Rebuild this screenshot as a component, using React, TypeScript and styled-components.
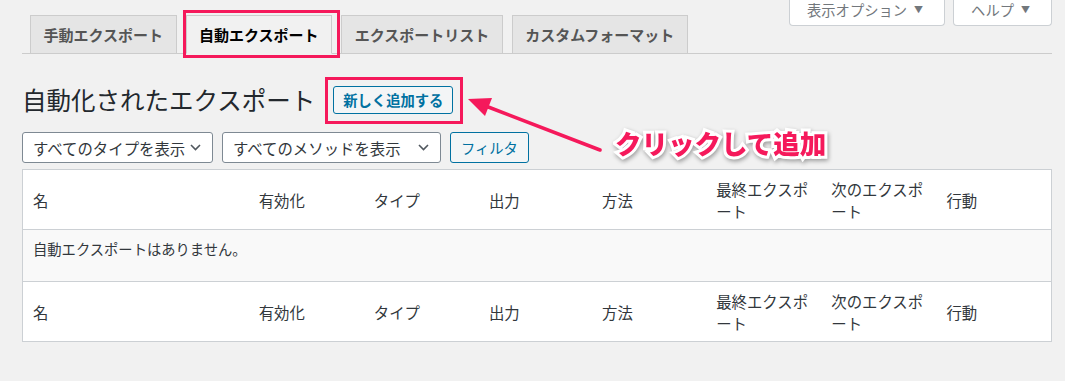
import React from "react";
import styled, { createGlobalStyle } from "styled-components";

const PINK = "#f5195b";

const Global = createGlobalStyle`
  html, body { margin: 0; padding: 0; background: #f1f1f1; }
  body { font-family: "Noto Sans CJK JP", "Noto Sans", sans-serif; color: #32373c; }
  * { box-sizing: border-box; }
`;

const Page = styled.div`
  position: relative;
  width: 1065px;
  height: 381px;
  padding: 0 13px 0 22px;
  overflow: hidden;
`;

const TopBar = styled.div`
  display: grid;
`;

const TabNav = styled.nav`
  grid-area: 1 / 1;
  display: flex;
  gap: 9px;
  padding: 15px 0 0 8px;
  border-bottom: 1px solid #ccc;
`;

const Tab = styled.a<{ $active?: boolean }>`
  position: relative;
  display: block;
  margin-bottom: -1px;
  padding: 5px 12.5px;
  border: 1px solid #ccc;
  border-bottom-color: ${(p) => (p.$active ? "#f1f1f1" : "#ccc")};
  background: ${(p) => (p.$active ? "#f1f1f1" : "#e5e5e5")};
  color: ${(p) => (p.$active ? "#000" : "#555")};
  font-size: 15px;
  font-weight: 700;
  line-height: 27px;
  white-space: nowrap;
  &::after {
    content: "";
    display: ${(p) => (p.$active ? "block" : "none")};
    position: absolute;
    top: -6px;
    left: -4px;
    right: -9px;
    bottom: -5px;
    border: 3px solid ${PINK};
  }
`;

const ScreenMeta = styled.div`
  grid-area: 1 / 1;
  justify-self: end;
  align-self: start;
  display: flex;
  gap: 8px;
`;

const MetaButton = styled.button`
  display: flex;
  align-items: center;
  height: 26px;
  padding: 0 21px 6px 17px;
  border: 1px solid #ccd0d4;
  border-top: none;
  border-radius: 0 0 4px 4px;
  background: #fff;
  color: #72777c;
  font-family: inherit;
  font-size: 14.3px;
  line-height: 20px;
`;

const Caret = styled.span`
  margin-left: 7px;
  font-size: 9px;
  color: #72777c;
`;

const TitleRow = styled.div`
  display: flex;
  align-items: center;
  margin-top: 30px;
`;

const Title = styled.h1`
  margin: 0;
  font-size: 24.5px;
  font-weight: 400;
  line-height: 32px;
  color: #23282d;
`;

const AddButton = styled.button`
  position: relative;
  margin-left: 18px;
  height: 28px;
  padding: 0 9px;
  border: 1px solid #0071a1;
  border-radius: 3px;
  background: #f3f5f6;
  color: #0071a1;
  font-family: inherit;
  font-size: 14.3px;
  font-weight: 700;
  line-height: 26px;
  &::after {
    content: "";
    position: absolute;
    top: -10px;
    left: -9px;
    right: -11px;
    bottom: -11px;
    border: 3px solid ${PINK};
  }
`;

const FilterRow = styled.div`
  display: flex;
  gap: 9px;
  margin-top: 16px;
`;

const Select = styled.div<{ $w: number }>`
  display: flex;
  align-items: center;
  justify-content: space-between;
  width: ${(p) => p.$w}px;
  height: 31px;
  padding: 0 11px 0 10px;
  border: 1px solid #7e8993;
  border-radius: 3px;
  background: #fff;
  color: #32373c;
  font-size: 15.4px;
  white-space: nowrap;
`;

const FilterButton = styled.button`
  height: 31px;
  padding: 0 10px;
  border: 1px solid #0071a1;
  border-radius: 3px;
  background: #f3f5f6;
  color: #0071a1;
  font-family: inherit;
  font-size: 14.3px;
`;

const Table = styled.table`
  margin-top: 6px;
  width: 1030px;
  border: 1px solid #ccd0d4;
  border-collapse: collapse;
  table-layout: fixed;
  background: #fff;
`;

const HeadCell = styled.th<{ $pos: "top" | "bottom" }>`
  padding: 8px 10px 7px;
  text-align: left;
  font-size: 15.4px;
  font-weight: 400;
  line-height: 22px;
  color: #32373c;
  vertical-align: middle;
  ${(p) => (p.$pos === "top" ? "border-bottom: 1px solid #ccd0d4;" : "border-top: 1px solid #ccd0d4;")}
`;

const EmptyCell = styled.td`
  height: 52px;
  padding: 8px 10px;
  vertical-align: top;
  background: #f9f9f9;
  font-size: 14.3px;
  line-height: 22px;
  color: #32373c;
`;

const Overlay = styled.svg`
  position: absolute;
  left: 0;
  top: 0;
  pointer-events: none;
`;

const Callout = styled.div`
  position: absolute;
  left: 615px;
  top: 130px;
  font-size: 26.5px;
  font-weight: 900;
  line-height: 1;
  color: ${PINK};
  -webkit-text-stroke: 6px #fff;
  paint-order: stroke fill;
  filter: drop-shadow(1px 2px 2px rgba(0, 0, 0, 0.35));
  white-space: nowrap;
`;

const columns: { label: string; w: number }[] = [
  { label: "名", w: 226 },
  { label: "有効化", w: 115 },
  { label: "タイプ", w: 115 },
  { label: "出力", w: 113 },
  { label: "方法", w: 114 },
  { label: "最終エクスポート", w: 115 },
  { label: "次のエクスポート", w: 115 },
  { label: "行動", w: 115 },
];

const Chevron = () => (
  <svg width="11" height="7" viewBox="0 0 11 7" fill="none">
    <path d="M1 1l4.5 4.5L10 1" stroke="#50575e" strokeWidth="1.6" />
  </svg>
);

const HeaderRow = ({ pos }: { pos: "top" | "bottom" }) => (
  <tr>
    {columns.map((c) => (
      <HeadCell key={c.label} $pos={pos}>
        {c.label}
      </HeadCell>
    ))}
  </tr>
);

export default function App() {
  return (
    <>
      <Global />
      <Page>
        <TopBar>
          <TabNav>
            <Tab>手動エクスポート</Tab>
            <Tab $active>自動エクスポート</Tab>
            <Tab>エクスポートリスト</Tab>
            <Tab>カスタムフォーマット</Tab>
          </TabNav>
          <ScreenMeta>
            <MetaButton>
              表示オプション<Caret>▼</Caret>
            </MetaButton>
            <MetaButton>
              ヘルプ<Caret>▼</Caret>
            </MetaButton>
          </ScreenMeta>
        </TopBar>

        <TitleRow>
          <Title>自動化されたエクスポート</Title>
          <AddButton>新しく追加する</AddButton>
        </TitleRow>

        <FilterRow>
          <Select $w={191}>
            <span>すべてのタイプを表示</span>
            <Chevron />
          </Select>
          <Select $w={219}>
            <span>すべてのメソッドを表示</span>
            <Chevron />
          </Select>
          <FilterButton>フィルタ</FilterButton>
        </FilterRow>

        <Table>
          <colgroup>
            {columns.map((c) => (
              <col key={c.label} style={{ width: c.w }} />
            ))}
          </colgroup>
          <thead>
            <HeaderRow pos="top" />
          </thead>
          <tbody>
            <tr>
              <EmptyCell colSpan={8}>自動エクスポートはありません。</EmptyCell>
            </tr>
          </tbody>
          <tfoot>
            <HeaderRow pos="bottom" />
          </tfoot>
        </Table>

        <Overlay width="1065" height="381" viewBox="0 0 1065 381">
          <line x1="600" y1="150" x2="487" y2="106.5" stroke={PINK} strokeWidth="3.5" strokeLinecap="round" />
          <polygon points="468,99 492,98 485,116" fill={PINK} />
        </Overlay>
        <Callout>クリックして追加</Callout>
      </Page>
    </>
  );
}
